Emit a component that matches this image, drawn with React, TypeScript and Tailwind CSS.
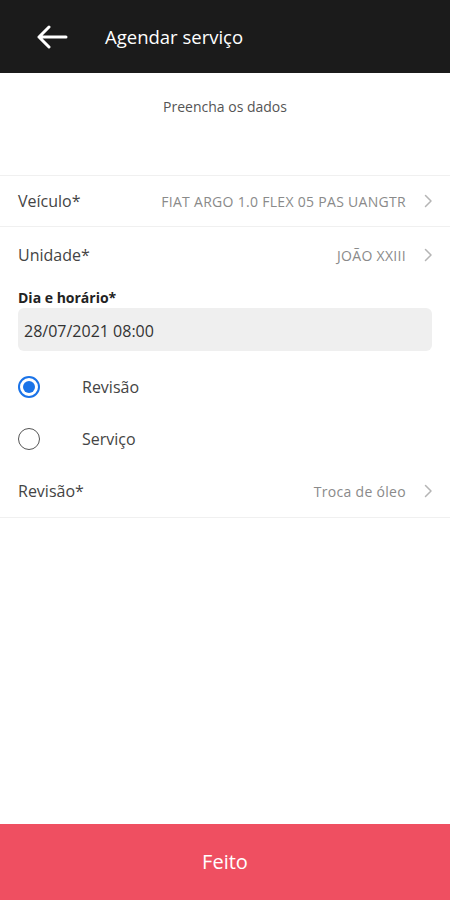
import { useState } from 'react';

type Row = {
  label: string;
  value: string;
  h: string;
};

function Chevron() {
  return (
    <svg width="9" height="14" viewBox="0 0 9 14" fill="none" className="ml-[18px] shrink-0">
      <polyline points="1.5,1.5 7,7 1.5,12.5" stroke="#b5b5b5" strokeWidth="1.5" strokeLinecap="round" strokeLinejoin="round" />
    </svg>
  );
}

function SelectRow({ label, value, h }: Row) {
  return (
    <div className={`flex items-center justify-between pl-[18px] pr-[17px] ${h}`}>
      <span className="text-[16px] text-[#444]">{label}</span>
      <div className="flex items-center">
        <span className="text-[14px] tracking-[0.3px] text-[#8a8a8a]">{value}</span>
        <Chevron />
      </div>
    </div>
  );
}

function Radio({ checked }: { checked: boolean }) {
  return checked ? (
    <span className="flex h-[22px] w-[22px] items-center justify-center rounded-full border-2 border-[#1a73e8]">
      <span className="h-[12px] w-[12px] rounded-full bg-[#1a73e8]" />
    </span>
  ) : (
    <span className="h-[22px] w-[22px] rounded-full border-[1.5px] border-[#555]" />
  );
}

export default function App() {
  const [kind, setKind] = useState<'revisao' | 'servico'>('revisao');

  return (
    <div className="flex h-[900px] w-[450px] flex-col bg-white font-['Open_Sans','Noto_Sans',sans-serif]">
      {/* HEADER */}
      <div className="flex h-[73px] items-center bg-[#1b1b1b]">
        <svg width="32" height="24" viewBox="0 0 32 24" fill="none" className="ml-[36px]">
          <path d="M30 12H3M13 2L3 12l10 10" stroke="white" strokeWidth="3" strokeLinecap="round" strokeLinejoin="round" />
        </svg>
        <span className="ml-[37px] text-[18.5px] text-white">Agendar serviço</span>
      </div>

      <div className="h-[102px] pt-[25px] text-center text-[14px] leading-[18px] text-[#555]">
        Preencha os dados
      </div>

      <div className="border-t border-b border-[#f0f0f0]">
        <SelectRow label="Veículo*" value="FIAT ARGO 1.0 FLEX 05 PAS UANGTR" h="h-[50px]" />
      </div>
      <SelectRow label="Unidade*" value="JOÃO XXIII" h="h-[56px]" />

      <div className="mt-[6px] px-[18px]">
        <div className="text-[14px] font-bold leading-[18px] text-[#222]">Dia e horário*</div>
        <div className="mt-[1px] flex h-[43px] items-center rounded-md bg-[#efefef] pl-[6px] pt-[3px] text-[16px] text-[#333]">
          28/07/2021 08:00
        </div>
      </div>

      <div className="mt-[10px]">
        <button
          onClick={() => setKind('revisao')}
          className="flex h-[52px] w-full items-center px-[18px]"
        >
          <Radio checked={kind === 'revisao'} />
          <span className="ml-[42px] text-[16px] text-[#444]">Revisão</span>
        </button>
        <button
          onClick={() => setKind('servico')}
          className="flex h-[52px] w-full items-center px-[18px]"
        >
          <Radio checked={kind === 'servico'} />
          <span className="ml-[42px] text-[16px] text-[#444]">Serviço</span>
        </button>
      </div>

      <div className="border-b border-[#f0f0f0]">
        <SelectRow label="Revisão*" value="Troca de óleo" h="h-[52px]" />
      </div>

      <div className="flex-1" />

      <button className="h-[76px] w-full bg-[#ef4f61] text-[20px] text-white">Feito</button>
    </div>
  );
}
